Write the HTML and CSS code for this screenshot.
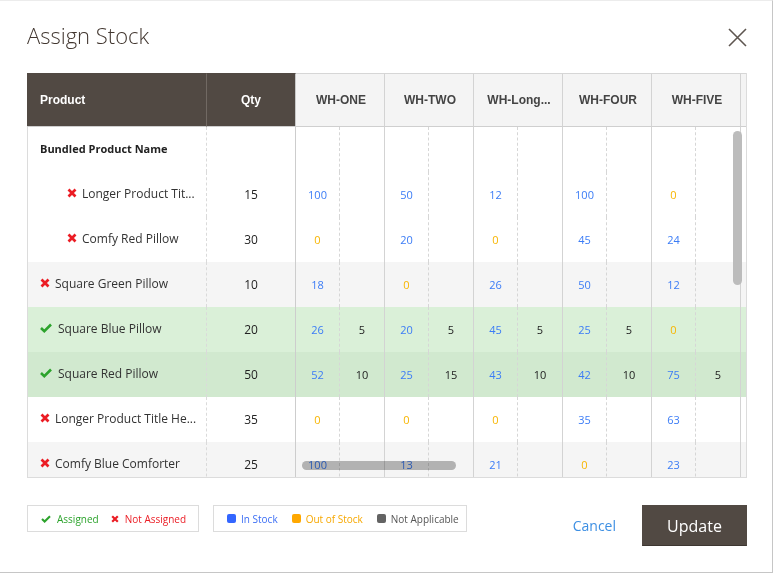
FILE: index.html
```html
<!DOCTYPE html>
<html>
<head>
<meta charset="utf-8">
<link rel="stylesheet" href="styles.css">
</head>
<body>
<div class="modal">
  <div class="modal-head">
    <h1 class="title">Assign Stock</h1>
    <svg class="close" width="19" height="19" viewBox="0 0 19 19"><path d="M1 1 L18 18 M18 1 L1 18" stroke="#5e5650" stroke-width="1.6" fill="none"/></svg>
  </div>
  <div class="grid-box">
    <div class="hrow">
      <div class="hc dark first">Product</div>
      <div class="hc dark qty">Qty</div>
      <div class="hc wh">WH-ONE</div>
      <div class="hc wh">WH-TWO</div>
      <div class="hc wh">WH-Long...</div>
      <div class="hc wh">WH-FOUR</div>
      <div class="hc wh">WH-FIVE</div>
      <div class="hc wh"></div>
    </div>
    <div class="body">
      <div class="row">
        <div class="c name bundle">Bundled Product Name</div><div class="c q"></div>
        <div class="c s1"></div><div class="c s2"></div><div class="c s1"></div><div class="c s2"></div><div class="c s1"></div><div class="c s2"></div><div class="c s1"></div><div class="c s2"></div><div class="c s1"></div><div class="c s2"></div><div class="c"></div>
      </div>
      <div class="row">
        <div class="c name child"><svg class="mk" width="10" height="10" viewBox="0 0 10 10"><path d="M1.5 1.5 L8.5 8.5 M8.5 1.5 L1.5 8.5" stroke="#eb1c24" stroke-width="2.7"/></svg>Longer Product Tit...</div><div class="c q">15</div>
        <div class="c s1 b">100</div><div class="c s2"></div><div class="c s1 b">50</div><div class="c s2"></div><div class="c s1 b">12</div><div class="c s2"></div><div class="c s1 b">100</div><div class="c s2"></div><div class="c s1 o">0</div><div class="c s2"></div><div class="c"></div>
      </div>
      <div class="row">
        <div class="c name child"><svg class="mk" width="10" height="10" viewBox="0 0 10 10"><path d="M1.5 1.5 L8.5 8.5 M8.5 1.5 L1.5 8.5" stroke="#eb1c24" stroke-width="2.7"/></svg>Comfy Red Pillow</div><div class="c q">30</div>
        <div class="c s1 o">0</div><div class="c s2"></div><div class="c s1 b">20</div><div class="c s2"></div><div class="c s1 o">0</div><div class="c s2"></div><div class="c s1 b">45</div><div class="c s2"></div><div class="c s1 b">24</div><div class="c s2"></div><div class="c"></div>
      </div>
      <div class="row gray">
        <div class="c name"><svg class="mk" width="10" height="10" viewBox="0 0 10 10"><path d="M1.5 1.5 L8.5 8.5 M8.5 1.5 L1.5 8.5" stroke="#eb1c24" stroke-width="2.7"/></svg>Square Green Pillow</div><div class="c q">10</div>
        <div class="c s1 b">18</div><div class="c s2"></div><div class="c s1 o">0</div><div class="c s2"></div><div class="c s1 b">26</div><div class="c s2"></div><div class="c s1 b">50</div><div class="c s2"></div><div class="c s1 b">12</div><div class="c s2"></div><div class="c"></div>
      </div>
      <div class="row green1">
        <div class="c name"><svg class="mk ok" width="12" height="10" viewBox="0 0 12 10"><path d="M1 5 L4.3 8.2 L11 1.5" stroke="#2ca32c" stroke-width="2.6" fill="none"/></svg>Square Blue Pillow</div><div class="c q">20</div>
        <div class="c s1 b">26</div><div class="c s2">5</div><div class="c s1 b">20</div><div class="c s2">5</div><div class="c s1 b">45</div><div class="c s2">5</div><div class="c s1 b">25</div><div class="c s2">5</div><div class="c s1 o">0</div><div class="c s2"></div><div class="c"></div>
      </div>
      <div class="row green2">
        <div class="c name"><svg class="mk ok" width="12" height="10" viewBox="0 0 12 10"><path d="M1 5 L4.3 8.2 L11 1.5" stroke="#2ca32c" stroke-width="2.6" fill="none"/></svg>Square Red Pillow</div><div class="c q">50</div>
        <div class="c s1 b">52</div><div class="c s2">10</div><div class="c s1 b">25</div><div class="c s2">15</div><div class="c s1 b">43</div><div class="c s2">10</div><div class="c s1 b">42</div><div class="c s2">10</div><div class="c s1 b">75</div><div class="c s2">5</div><div class="c"></div>
      </div>
      <div class="row">
        <div class="c name"><svg class="mk" width="10" height="10" viewBox="0 0 10 10"><path d="M1.5 1.5 L8.5 8.5 M8.5 1.5 L1.5 8.5" stroke="#eb1c24" stroke-width="2.7"/></svg>Longer Product Title He...</div><div class="c q">35</div>
        <div class="c s1 o">0</div><div class="c s2"></div><div class="c s1 o">0</div><div class="c s2"></div><div class="c s1 o">0</div><div class="c s2"></div><div class="c s1 b">35</div><div class="c s2"></div><div class="c s1 b">63</div><div class="c s2"></div><div class="c"></div>
      </div>
      <div class="row gray">
        <div class="c name"><svg class="mk" width="10" height="10" viewBox="0 0 10 10"><path d="M1.5 1.5 L8.5 8.5 M8.5 1.5 L1.5 8.5" stroke="#eb1c24" stroke-width="2.7"/></svg>Comfy Blue Comforter</div><div class="c q">25</div>
        <div class="c s1 b">100</div><div class="c s2"></div><div class="c s1 b">13</div><div class="c s2"></div><div class="c s1 b">21</div><div class="c s2"></div><div class="c s1 o">0</div><div class="c s2"></div><div class="c s1 b">23</div><div class="c s2"></div><div class="c"></div>
      </div>
    </div>
    <div class="vthumb"></div>
    <div class="hthumb"></div>
  </div>
  <div class="foot">
    <div class="legend l1">
      <span class="li green"><svg width="10" height="8" viewBox="0 0 12 10"><path d="M1 5 L4.3 8.2 L11 1.5" stroke="#2ca32c" stroke-width="2.6" fill="none"/></svg>Assigned</span>
      <span class="li red"><svg width="8" height="8" viewBox="0 0 10 10"><path d="M1.5 1.5 L8.5 8.5 M8.5 1.5 L1.5 8.5" stroke="#eb1c24" stroke-width="2.7"/></svg>Not Assigned</span>
    </div>
    <div class="legend l2">
      <span class="li blue"><i class="sq sq-b"></i>In Stock</span>
      <span class="li orange"><i class="sq sq-o"></i>Out of Stock</span>
      <span class="li grey"><i class="sq sq-g"></i>Not Applicable</span>
    </div>
    <a class="cancel">Cancel</a>
    <button class="update">Update</button>
  </div>
</div>
</body>
</html>
```
FILE: styles.css
```css
html, body { margin: 0; padding: 0; background: #fff; }
body { font-family: "Open Sans", "Liberation Sans", sans-serif; color: #333; }
.modal {
  box-sizing: border-box;
  width: 773px; height: 573px;
  border-top: 1px solid #ececec;
  border-right: 1px solid #c6c6c6;
  border-bottom: 1px solid #c6c6c6;
  padding: 0 25px 0 27px;
  display: flex; flex-direction: column;
}
.modal-head {
  height: 72px;
  display: flex; align-items: center; justify-content: space-between;
}
.title {
  margin: 0 0 5px 0; font-weight: 300; font-size: 22px; color: #41362f;
}
.close { margin-right: 0; margin-top: 1px; }
.grid-box {
  position: relative;
  width: 720px; height: 405px;
  box-sizing: border-box;
  overflow: hidden;
  border-right: 1px solid #dcdcdc;
  border-bottom: 1px solid #dcdcdc;
}
.hrow {
  display: grid;
  grid-template-columns: 180px 89px repeat(5, 89px) 60px;
  height: 54px;
}
.hc {
  box-sizing: border-box;
  display: flex; align-items: center; justify-content: center;
  font-family: "Liberation Sans", Arial, sans-serif; font-weight: 700; font-size: 12px;
  border-bottom: 1px solid #cfcfcf;
}
.dark { background: #514943; color: #fff; border-top: 1px solid #514943; }
.first { justify-content: flex-start; padding-left: 13px; border-right: 1px solid #716963; }
.qty { border-right: 1px solid #c8c8c8; }
.wh { background: #f4f4f4; color: #444; border-right: 1px solid #d3d3d3; border-top: 1px solid #d6d6d6; padding-left: 2px; }
.body { border-left: 1px solid #dcdcdc; }
.row {
  display: grid;
  grid-template-columns: 179px 89px repeat(5, 44px 45px) 60px;
  height: 45px;
}
.row.gray { background: #f5f5f5; }
.row.green1 { background: #daf0d8; }
.row.green2 { background: #d1e9cf; }
.c {
  box-sizing: border-box;
  display: flex; align-items: center; justify-content: center;
  font-size: 11px; color: #222;
  padding-bottom: 1px;
}
.name {
  justify-content: flex-start; padding-left: 12px;
  font-size: 12px; color: #333;
  border-right: 1px dashed #dadada;
  padding-bottom: 3px;
  white-space: nowrap;
}
.name.child { padding-left: 39px; }
.bundle { font-weight: 700; font-size: 11px; color: #222; padding-bottom: 2px; }
.mk { margin-right: 5px; flex: none; }
.mk.ok { margin-right: 6px; }
.q { font-size: 12px; border-right: 1px solid #cdcdcd; }
.s1 { border-right: 1px dashed #d6d6d6; }
.s2 { border-right: 1px solid #d3d3d3; }
.b { color: #3b7cf6; }
.o { color: #f7b500; }
.vthumb {
  position: absolute; left: 706px; top: 58px;
  width: 9px; height: 154px; border-radius: 5px;
  background: #bcbcbc;
}
.hthumb {
  position: absolute; left: 275px; top: 388px;
  width: 154px; height: 9px; border-radius: 5px;
  background: #b9b9b9;
  mix-blend-mode: multiply;
}
.foot {
  display: flex; align-items: center;
  margin-top: 27px;
  width: 720px;
}
.legend {
  box-sizing: border-box;
  height: 27px;
  border: 1px solid #dcdcdc;
  display: flex; align-items: center;
  font-size: 10px;
  align-self: flex-start;
}
.l1 { width: 172px; padding-left: 13px; gap: 12px; }
.l2 { width: 254px; margin-left: 14px; padding-left: 13px; gap: 14px; }
.li { display: flex; align-items: center; white-space: nowrap; }
.li svg { margin-right: 6px; }
.green { color: #2ca32c; }
.red { color: #eb1c24; }
.blue { color: #3b6ef5; }
.orange { color: #f7a800; }
.grey { color: #555; }
.sq { display: inline-block; width: 9px; height: 9px; border-radius: 2px; margin-right: 5px; }
.sq-b { background: #3366ff; }
.sq-o { background: #ffa800; }
.sq-g { background: #636363; }
.cancel {
  margin-left: auto; margin-right: 26px;
  font-size: 14px; color: #3d8fe3; cursor: pointer;
}
.update {
  width: 105px; height: 41px;
  background: #514943; color: #fff;
  border: 1px solid #514943; border-bottom-color: #3d3631;
  font-family: "Open Sans", "Liberation Sans", sans-serif;
  font-size: 16px; padding: 0; margin-top: 0;
  align-self: flex-start;
}
```
